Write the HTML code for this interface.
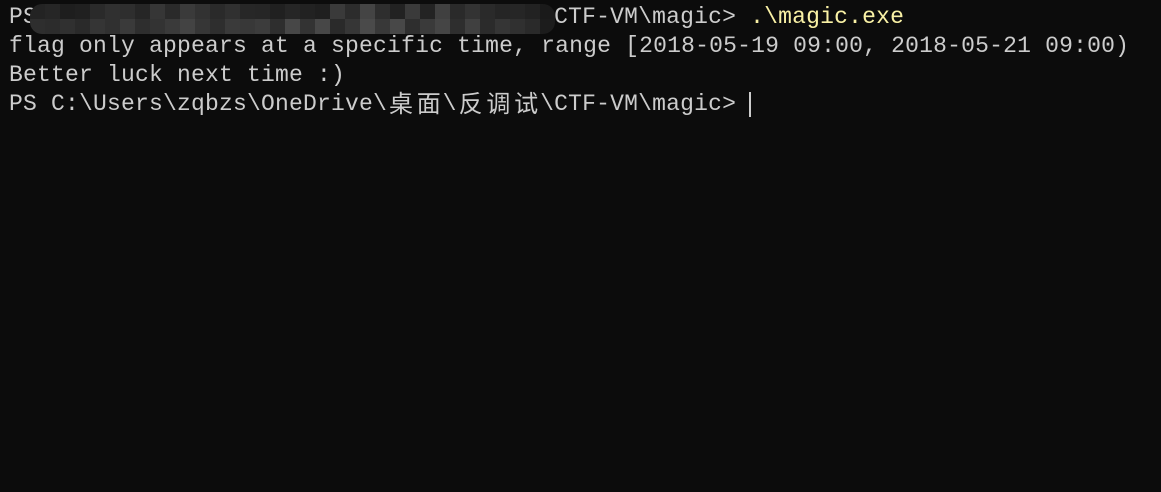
<!DOCTYPE html>
<html><head><meta charset="utf-8"><style>
html,body{margin:0;padding:0;background:#0c0c0c;width:1161px;height:492px;overflow:hidden}
.t{position:absolute;left:9px;top:3px;font-family:"Liberation Mono","Noto Sans CJK SC",monospace;font-size:23px;letter-spacing:0.2px;line-height:29px;color:#cccccc;white-space:pre}
.c{display:inline-block;position:relative;top:-3px;width:27.8px;height:29px;line-height:29px;vertical-align:top;text-align:center;font-family:"Noto Sans CJK SC",sans-serif;font-size:24px;letter-spacing:0}
.y{color:#f9f1a5}
.m{position:absolute;left:30px;top:4px;width:525px;height:30px;display:grid;grid-template-columns:repeat(35,15px);grid-auto-rows:15px;border-radius:12px;overflow:hidden}
.m div{background:#2c2c2c}
.cur{position:absolute;left:749px;top:92px;width:2px;height:25px;background:#cccccc}
</style></head><body>
<div class="t">PS C:\Users\zqbzs\OneDrive\<span class="c">桌</span><span class="c">面</span>\<span class="c">反</span><span class="c">调</span><span class="c">试</span>\CTF-VM\magic&gt; <span class="y">.\magic.exe</span>
flag only appears at a specific time, range [2018-05-19 09:00, 2018-05-21 09:00)
Better luck next time :)
PS C:\Users\zqbzs\OneDrive\<span class="c">桌</span><span class="c">面</span>\<span class="c">反</span><span class="c">调</span><span class="c">试</span>\CTF-VM\magic&gt; </div>
<div class="m">
<div style="background:#232323"></div><div style="background:#262626"></div><div style="background:#1e1e1e"></div><div style="background:#202020"></div><div style="background:#2a2a2a"></div><div style="background:#303030"></div><div style="background:#2e2e2e"></div><div style="background:#262626"></div><div style="background:#363636"></div><div style="background:#2a2a2a"></div><div style="background:#3a3a3a"></div><div style="background:#323232"></div><div style="background:#2a2a2a"></div><div style="background:#303030"></div><div style="background:#272727"></div><div style="background:#262626"></div><div style="background:#202020"></div><div style="background:#262626"></div><div style="background:#222222"></div><div style="background:#1f1f1f"></div><div style="background:#3a3a3a"></div><div style="background:#2c2c2c"></div><div style="background:#444444"></div><div style="background:#2e2e2e"></div><div style="background:#222222"></div><div style="background:#3a3a3a"></div><div style="background:#232323"></div><div style="background:#404040"></div><div style="background:#2a2a2a"></div><div style="background:#333333"></div><div style="background:#2a2a2a"></div><div style="background:#252525"></div><div style="background:#262626"></div><div style="background:#222222"></div><div style="background:#1a1a1a"></div>
<div style="background:#2e2e2e"></div><div style="background:#2c2c2c"></div><div style="background:#303030"></div><div style="background:#2a2a2a"></div><div style="background:#353535"></div><div style="background:#303030"></div><div style="background:#3a3a3a"></div><div style="background:#2e2e2e"></div><div style="background:#333333"></div><div style="background:#3a3a3a"></div><div style="background:#434343"></div><div style="background:#363636"></div><div style="background:#2e2e2e"></div><div style="background:#3a3a3a"></div><div style="background:#383838"></div><div style="background:#3c3c3c"></div><div style="background:#2e2e2e"></div><div style="background:#474747"></div><div style="background:#333333"></div><div style="background:#474747"></div><div style="background:#2a2a2a"></div><div style="background:#363636"></div><div style="background:#4a4a4a"></div><div style="background:#383838"></div><div style="background:#484848"></div><div style="background:#2e2e2e"></div><div style="background:#3a3a3a"></div><div style="background:#454545"></div><div style="background:#2e2e2e"></div><div style="background:#404040"></div><div style="background:#2b2b2b"></div><div style="background:#353535"></div><div style="background:#303030"></div><div style="background:#2a2a2a"></div><div style="background:#1c1c1c"></div>
</div>
<div class="cur"></div>
</body></html>
